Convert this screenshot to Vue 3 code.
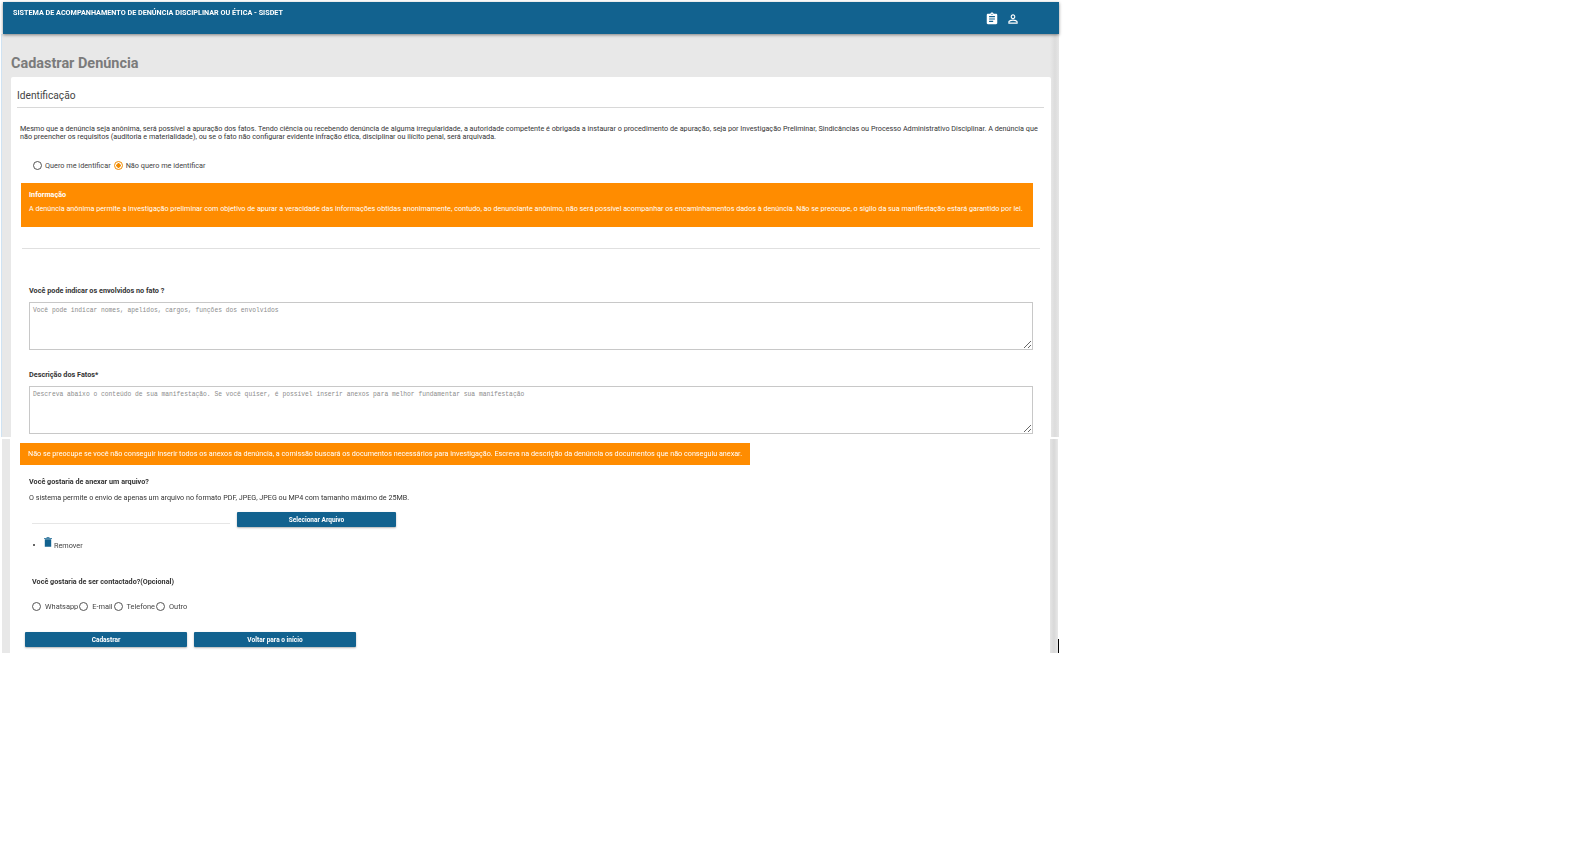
<script setup>
const contactOptions = ['Whatsapp', 'E-mail', 'Telefone', 'Outro']
</script>

<template>
  <div class="shot">
    <section class="upper">
      <header class="topbar">
        <span class="system">SISTEMA DE ACOMPANHAMENTO DE DENÚNCIA DISCIPLINAR OU ÉTICA - SISDET</span>
        <div class="top-icons">
          <svg viewBox="0 0 24 24" class="ic-clip"><path fill="#fff" d="M19 3h-4.18C14.4 1.84 13.3 1 12 1s-2.4.84-2.82 2H5c-1.1 0-2 .9-2 2v14c0 1.1.9 2 2 2h14c1.1 0 2-.9 2-2V5c0-1.1-.9-2-2-2zm-7 0c.55 0 1 .45 1 1s-.45 1-1 1-1-.45-1-1 .45-1 1-1zm2 14H7v-2h7v2zm3-4H7v-2h10v2zm0-4H7V7h10v2z"/></svg>
          <svg viewBox="0 0 24 24" class="ic-user"><path fill="#fff" d="M12 5.9a2.1 2.1 0 1 1 0 4.2 2.1 2.1 0 0 1 0-4.2m0 9c2.97 0 6.1 1.46 6.1 2.1v1.1H5.9V17c0-.64 3.13-2.1 6.1-2.1M12 4C9.79 4 8 5.79 8 8s1.79 4 4 4 4-1.79 4-4-1.79-4-4-4zm0 9c-2.67 0-8 1.34-8 4v3h16v-3c0-2.66-5.33-4-8-4z"/></svg>
        </div>
      </header>
      <div class="grey-area">
        <h1 class="page-title">Cadastrar Denúncia</h1>
        <div class="card card-top">
          <h2 class="card-head">Identificação</h2>
          <p class="intro">Mesmo que a denúncia seja anônima, será possível a apuração dos fatos. Tendo ciência ou recebendo denúncia de alguma irregularidade, a autoridade competente é obrigada a instaurar o procedimento de apuração, seja por Investigação Preliminar, Sindicâncias ou Processo Administrativo Disciplinar. A denúncia que<br>não preencher os requisitos (auditoria e materialidade), ou se o fato não configurar evidente infração ética, disciplinar ou ilícito penal, será arquivada.</p>
          <div class="radios id-radios">
            <label class="radio"><span class="dot"></span>Quero me identificar</label>
            <label class="radio"><span class="dot on"></span>Não quero me identificar</label>
          </div>
          <div class="alert alert-info">
            <strong>Informação</strong>
            <span>A denúncia anônima permite a investigação preliminar com objetivo de apurar a veracidade das informações obtidas anonimamente, contudo, ao denunciante anônimo, não será possível acompanhar os encaminhamentos dados à denúncia. Não se preocupe, o sigilo da sua manifestação estará garantido por lei.</span>
          </div>
          <div class="divider"></div>
          <label class="field-label first">Você pode indicar os envolvidos no fato ?</label>
          <textarea class="area" placeholder="Você pode indicar nomes, apelidos, cargos, funções dos envolvidos"></textarea>
          <label class="field-label second">Descrição dos Fatos*</label>
          <textarea class="area" placeholder="Descreva abaixo o conteúdo de sua manifestação. Se você quiser, é possível inserir anexos para melhor fundamentar sua manifestação"></textarea>
        </div>
      </div>
    </section>

    <section class="lower">
      <div class="card card-bottom">
        <div class="alert alert-note">Não se preocupe se você não conseguir inserir todos os anexos da denúncia, a comissão buscará os documentos necessários para investigação. Escreva na descrição da denúncia os documentos que não conseguiu anexar.</div>
        <p class="bold-line attach">Você gostaria de anexar um arquivo?</p>
        <p class="hint">O sistema permite o envio de apenas um arquivo no formato PDF, JPEG, JPEG ou MP4 com tamanho máximo de 25MB.</p>
        <div class="file-row">
          <div class="file-line"></div>
          <button class="btn btn-file">Selecionar Arquivo</button>
        </div>
        <div class="remove-row">
          <span class="bullet"></span>
          <svg viewBox="0 0 10 12" class="ic-trash"><path fill="#12628f" d="M1 2.6h8V12H1zM0 1h3.2V0h3.6v1H10v1H0z"/></svg>
          <span class="remove">Remover</span>
        </div>
        <p class="bold-line contact">Você gostaria de ser contactado?(Opcional)</p>
        <div class="radios contact-radios">
          <label v-for="o in contactOptions" :key="o" class="radio"><span class="dot"></span>{{ o }}</label>
        </div>
        <div class="actions">
          <button class="btn btn-main">Cadastrar</button>
          <button class="btn btn-main">Voltar para o início</button>
        </div>
      </div>
      <i class="tick"></i>
    </section>
  </div>
</template>

<style>
html, body { background: #fff; }
</style>

<style scoped>
.shot {
  width: 1059px;
  padding-top: 2px;
  font-family: Roboto, "Liberation Sans", sans-serif;
  color: #333;
  filter: blur(0.35px);
  will-change: filter;
}
.upper { margin-left: 2px; }
.topbar {
  height: 32px;
  margin-left: 1px;
  background: #12628f;
  box-shadow: 0 1px 3px rgba(0, 0, 0, .45);
  position: relative;
  display: flex;
  justify-content: space-between;
  color: #fff;
}
.system {
  margin: 6px 0 0 10px;
  font-size: 7.23px;
  line-height: 9px;
  font-weight: 700;
}
.top-icons {
  display: flex;
  align-items: center;
  gap: 7px;
  margin-right: 39px;
  margin-top: 1px;
}
.ic-clip { width: 14px; height: 14px; }
.ic-user { width: 14px; height: 14px; }
.grey-area {
  height: 403px;
  background: linear-gradient(90deg, #e8e8e8 0, #e8e8e8 1048px, #dcdcdc 1053px, #e6e6e6 1057px);
  padding-left: 9px;
  overflow: hidden;
  border-left: 1px solid #cfe3f3;
  margin-left: -1px;
}
.page-title {
  margin: 20px 0 3px;
  font-size: 14.45px;
  line-height: 20px;
  font-weight: 700;
  color: #7b7b7b;
}
.card {
  width: 1040px;
  background: #fff;
  box-sizing: border-box;
}
.card-top {
  height: 360px;
  padding: 0 7px 0 6px;
  border-radius: 2px 2px 0 0;
}
.card-head {
  margin: 0;
  padding-top: 12px;
  height: 31px;
  box-sizing: border-box;
  border-bottom: 1px solid #d8d8d8;
  font-size: 10.2px;
  line-height: 14px;
  font-weight: 400;
  color: #444;
}
.intro {
  margin: 17px 0 0 3px;
  font-size: 7.22px;
  line-height: 8px;
  white-space: nowrap;
  color: #333;
}
.radios { display: flex; align-items: center; }
.radio {
  display: inline-flex;
  align-items: center;
  font-size: 7.3px;
  color: #444;
}
.dot {
  width: 9px;
  height: 9px;
  box-sizing: border-box;
  border: 1px solid #555;
  border-radius: 50%;
  background: #fff;
}
.dot.on {
  border-color: #f28c00;
  background: radial-gradient(circle, #f28c00 0 2px, #fff 2.4px);
}
.id-radios { margin: 19px 0 0 16px; height: 10px; }
.id-radios .radio { gap: 3px; margin-right: 3px; }
.alert {
  background: #ff8c00;
  color: #fff;
  box-sizing: border-box;
}
.alert-info {
  width: 1012px;
  height: 44px;
  margin: 13px 0 0 4px;
  padding: 7px 8px;
  display: flex;
  flex-direction: column;
  gap: 5px;
  font-size: 7.2px;
  line-height: 9px;
  white-space: nowrap;
}
.divider {
  height: 1px;
  width: 1018px;
  margin: 21px 0 0 5px;
  background: #e0e0e0;
}
.field-label {
  display: block;
  margin-left: 12px;
  font-size: 7.27px;
  line-height: 10px;
  font-weight: 700;
  color: #333;
}
.first { margin-top: 37px; }
.second { margin-top: 20px; }
.area {
  display: block;
  width: 1004px;
  height: 48px;
  margin: 6px 0 0 12px;
  padding: 4px 3px 3px;
  box-sizing: border-box;
  border: 1px solid #c8c8c8;
  background: #fff;
  font-family: "Liberation Mono", monospace;
  font-size: 6.3px;
  line-height: 8px;
}
.area::placeholder { color: #8c8c8c; }
.lower {
  position: relative;
  margin: 2px 0 0 2px;
  height: 214px;
  width: 1056px;
  background: linear-gradient(90deg, #e8e8e8 0, #e8e8e8 1047px, #d8d8d8 1052px, #e8e8e8 1056px);
}
.card-bottom {
  height: 214px;
  margin-left: 8px;
  overflow: hidden;
}
.alert-note {
  width: 730px;
  height: 22px;
  margin: 4px 0 0 10px;
  padding-left: 8px;
  font-size: 7.21px;
  line-height: 22px;
  white-space: nowrap;
}
.bold-line {
  margin: 0;
  font-size: 7.22px;
  line-height: 10px;
  font-weight: 700;
  color: #333;
}
.attach { margin: 12px 0 0 19px; }
.hint {
  margin: 6px 0 0 19px;
  font-size: 7.18px;
  line-height: 10px;
  color: #333;
}
.file-row {
  display: flex;
  align-items: flex-end;
  margin: 8px 0 0 22px;
  height: 16px;
}
.file-line {
  width: 198px;
  height: 1px;
  margin: 0 7px 3px 0;
  background: #e6e6e6;
}
.btn {
  border: 0;
  padding: 0;
  height: 15px;
  background: #12628f;
  color: #fff;
  border-radius: 1px;
  box-shadow: 0 1px 2px rgba(0, 0, 0, .3);
  font-family: inherit;
  font-size: 6.55px;
  font-weight: 700;
}
.btn-file { width: 159px; }
.remove-row {
  display: flex;
  align-items: flex-end;
  height: 12px;
  margin: 9px 0 0 23px;
}
.bullet {
  width: 2px;
  height: 2px;
  background: #333;
  border-radius: 50%;
  margin: 0 9px 2px 0;
}
.ic-trash { width: 8px; height: 10px; margin-bottom: 1px; }
.remove {
  margin: 0 0 -2px 2px;
  font-size: 7.3px;
  line-height: 9px;
  color: #444;
}
.contact { margin: 29px 0 0 22px; }
.contact-radios { margin: 14px 0 0 22px; height: 10px; }
.contact-radios .radio { gap: 4px; margin-right: 1px; font-size: 7.4px; }
.actions {
  display: flex;
  gap: 7px;
  margin: 21px 0 0 15px;
}
.btn-main { width: 162px; }
.tick {
  position: absolute;
  right: -1px;
  bottom: 0;
  width: 1px;
  height: 14px;
  background: #000;
}
</style>
